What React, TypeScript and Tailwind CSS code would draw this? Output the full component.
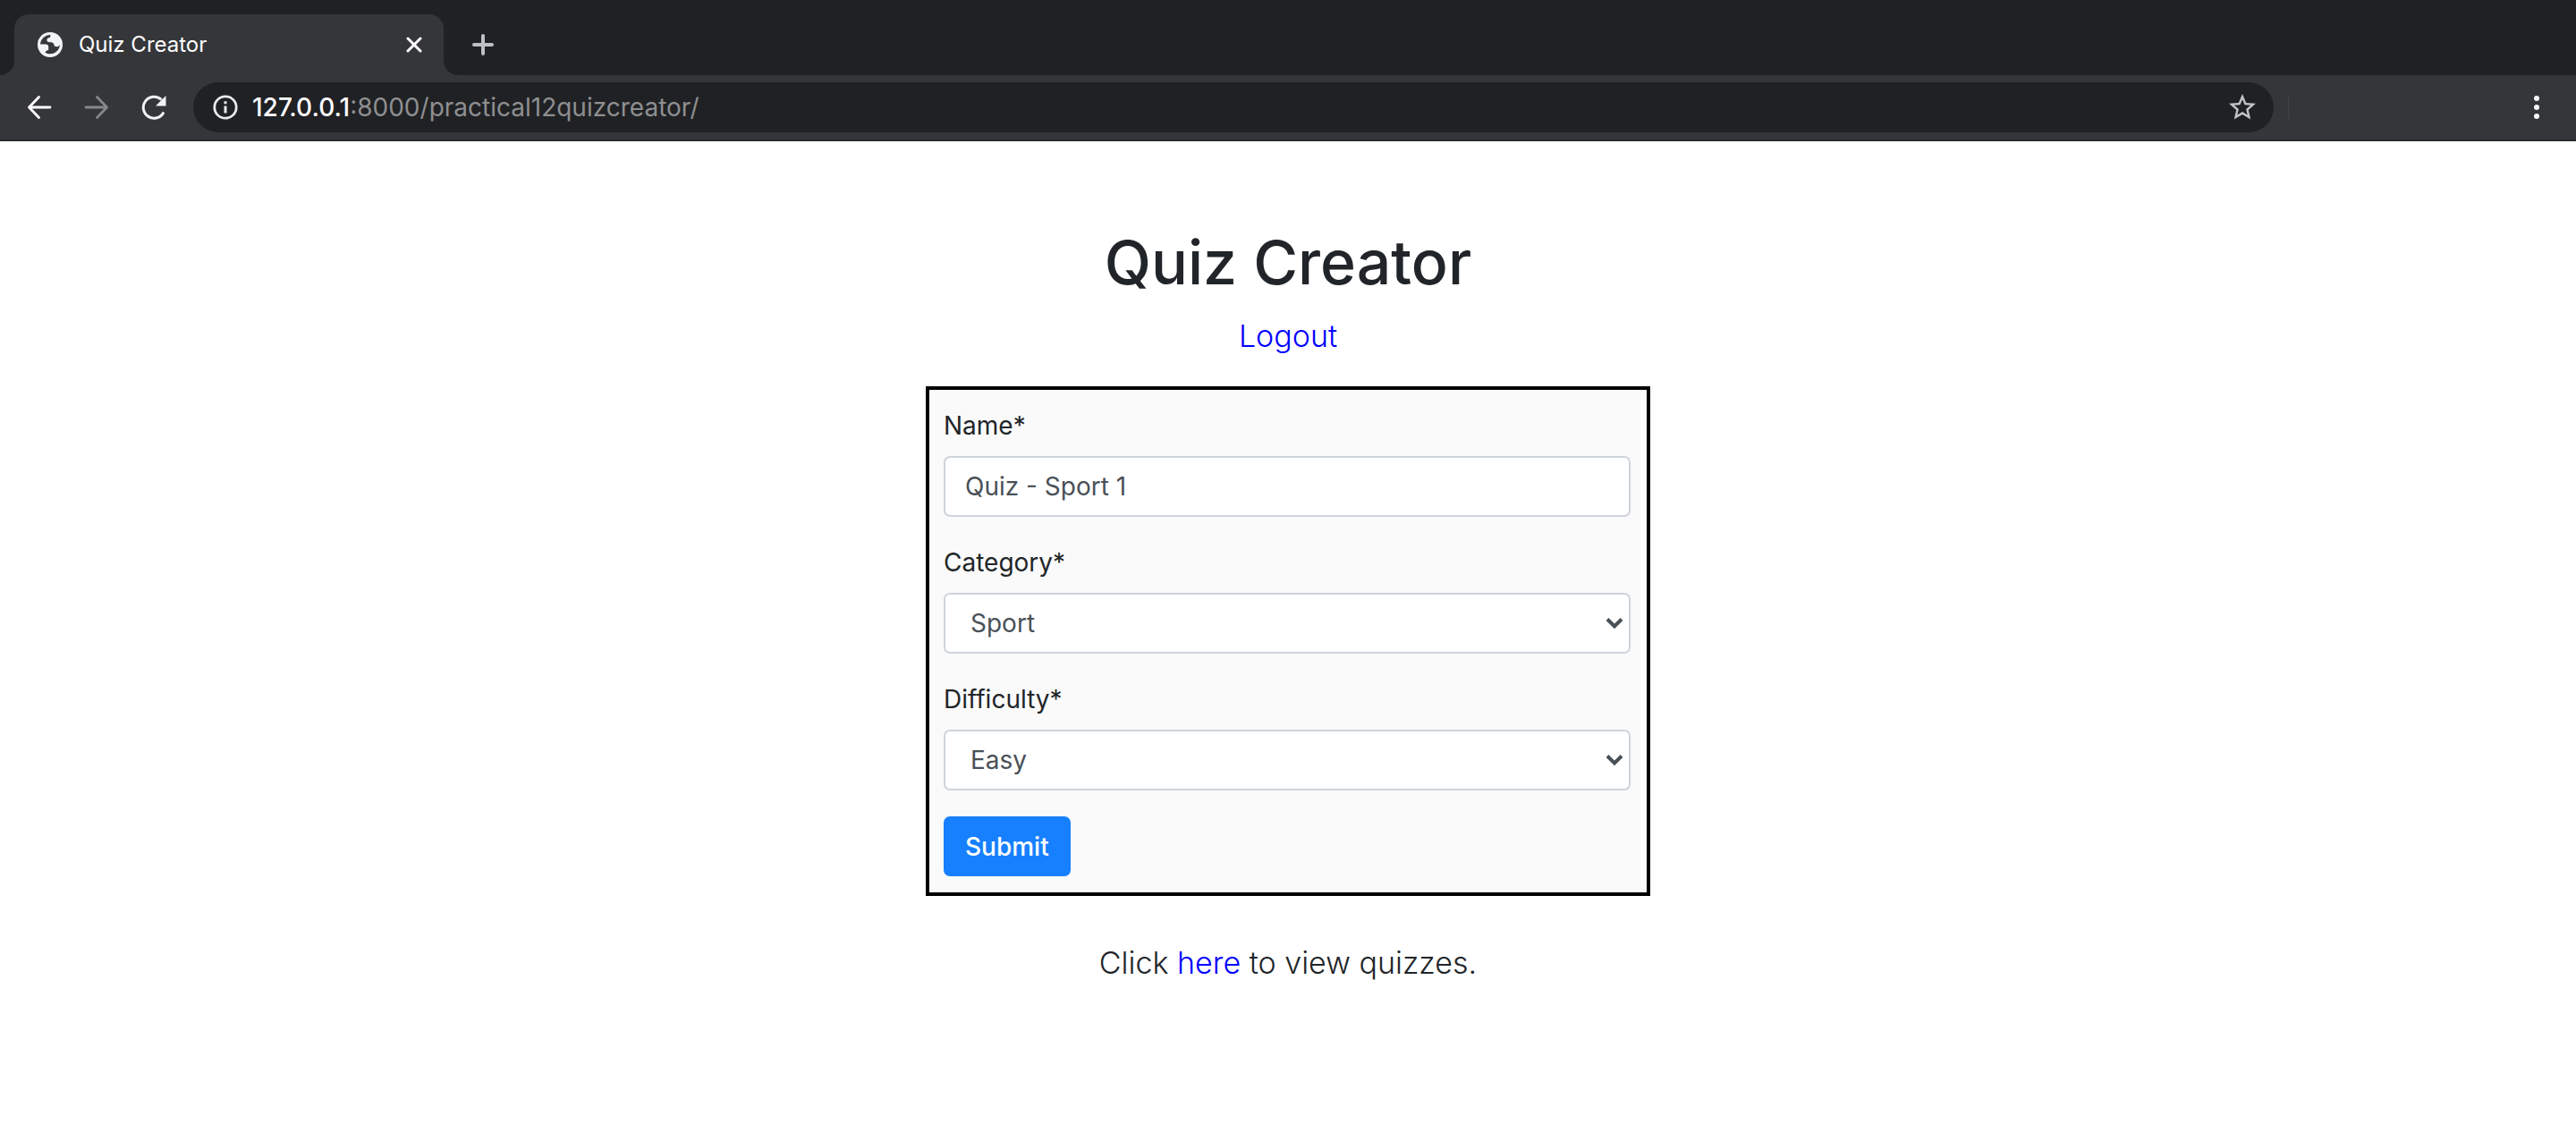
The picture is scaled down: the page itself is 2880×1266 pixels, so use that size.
import type { ReactNode } from 'react';

const fieldClass =
  'block h-17 w-full rounded-[7px] border-2 border-[#ced4da] bg-white text-[28px] leading-10 text-[#495057]';

function GlobeIcon() {
  return (
    <svg viewBox="0 0 28 28" className="size-7 shrink-0" aria-hidden="true">
      <circle cx="14" cy="14" r="14" fill="#f1f3f4" />
      <path
        d="M14.6 3.1A11 11 0 0 0 3 13.600h6c2 0 3.200 1 3.200 2.700V20c-1.500 0-2.600.600-3.800 2.800a11 11 0 0 0 16.600-9.300c-.600 1.700-1.800 2.800-3.600 2.800-2 0-3-1-3.300-3.200-.900-1.400-2-1.900-3.800-1.800-2.600.100-4-.700-3.900-2.400 0-2 1.200-2.900 3.600-2.900.100-1.100.200-1.900.600-2.900z"
        fill="#35363a"
      />
    </svg>
  );
}

function ToolbarButton({ label, children, disabled }: { label: string; children: ReactNode; disabled?: boolean }) {
  return (
    <button type="button" aria-label={label} disabled={disabled} className="flex size-8 items-center justify-center">
      {children}
    </button>
  );
}

function ArrowLeft({ className }: { className: string }) {
  return (
    <svg viewBox="0 0 28 28" className={className} fill="none" stroke="currentColor" strokeWidth="2.8" strokeLinecap="round" strokeLinejoin="round">
      <path d="M26 14H2.500M13.500 2.500L2.500 14l11 11.500" />
    </svg>
  );
}

function BrowserChrome() {
  return (
    <header className="bg-[#202124]">
      <div className="flex h-21 items-end">
        <div className="h-17 w-4 bg-[#35363a]">
          <div className="h-full rounded-br-2xl bg-[#202124]" />
        </div>
        <div className="flex h-17 w-120 items-center rounded-t-2xl bg-[#35363a] pr-6 pl-6.5">
          <GlobeIcon />
          <span className="ml-4.5 grow text-2xl text-white">Quiz Creator</span>
          <button type="button" aria-label="Close tab">
            <svg viewBox="0 0 18 18" className="size-4.5" fill="none" stroke="#fff" strokeWidth="3" strokeLinecap="round">
              <path d="M2 2l14 14M16 2L2 16" />
            </svg>
          </button>
        </div>
        <div className="h-17 w-4 bg-[#35363a]">
          <div className="h-full rounded-bl-2xl bg-[#202124]" />
        </div>
        <button type="button" aria-label="New tab" className="mb-5.5 ml-4">
          <svg viewBox="0 0 24 24" className="size-6" fill="none" stroke="#bdc1c6" strokeWidth="4" strokeLinecap="round">
            <path d="M12 2v20M2 12h20" />
          </svg>
        </button>
      </div>
      <div className="flex h-[74px] items-center border-b-2 border-[#28292c] bg-[#35363a] px-7">
        <div className="flex gap-8">
          <ToolbarButton label="Back">
            <ArrowLeft className="size-7 text-white" />
          </ToolbarButton>
          <ToolbarButton label="Forward" disabled>
            <ArrowLeft className="size-7 rotate-180 text-[#868789]" />
          </ToolbarButton>
          <ToolbarButton label="Reload">
            <svg viewBox="0 0 28 28" className="size-7">
              <path d="M25 19.500a12 12 0 1 1-2.500-14" fill="none" stroke="#f1f3f4" strokeWidth="3" />
              <path d="M27.500 1v11.500H16z" fill="#f1f3f4" />
            </svg>
          </ToolbarButton>
        </div>
        <div className="ml-7 flex h-14 grow items-center rounded-full bg-[#202124] pr-5 pl-5.5">
          <svg viewBox="0 0 28 28" className="size-7 shrink-0" aria-hidden="true">
            <circle cx="14" cy="14" r="12.200" fill="none" stroke="#e8eaed" strokeWidth="2.800" />
            <path d="M14 12.500v8M14 7.200v3" stroke="#e8eaed" strokeWidth="3" />
          </svg>
          <p className="ml-4 grow text-[28px] leading-10 text-[#8e8f91]">
            <span className="font-medium text-white">127.0.0.1</span>:8000/practical12quizcreator/
          </p>
          <button type="button" aria-label="Bookmark this tab">
            <svg viewBox="2 2 20 20" className="size-7.5" fill="#c3c4c6">
              <path d="M22 9.240l-7.190-.620L12 2 9.190 8.630 2 9.240l5.460 4.730L5.820 21 12 17.270 18.180 21l-1.630-7.030L22 9.240zM12 15.400l-3.760 2.270 1-4.280-3.320-2.880 4.380-.380L12 6.100l1.710 4.040 4.380.380-3.320 2.880 1 4.280L12 15.400z" />
            </svg>
          </button>
        </div>
        <div className="ml-4 h-7 w-1 rounded-l-full border-l border-[#414246]" />
        <button type="button" aria-label="Menu" className="ml-[258px] flex size-8 items-center justify-center">
          <svg viewBox="0 0 6 26" className="h-6.5 w-1.5" fill="#f8f9fa">
            <circle cx="3" cy="3" r="3" />
            <circle cx="3" cy="13" r="3" />
            <circle cx="3" cy="23" r="3" />
          </svg>
        </button>
      </div>
    </header>
  );
}

function Field({ id, label, children }: { id: string; label: string; children: ReactNode }) {
  return (
    <div className="mb-[29px]">
      <label htmlFor={id} className="mb-3 block text-[28px] leading-11">
        {label}
      </label>
      {children}
    </div>
  );
}

function SelectBox({ id, options }: { id: string; options: string[] }) {
  return (
    <div className="relative">
      <select id={id} defaultValue={options[0]} className={`${fieldClass} appearance-none pr-12 pl-7`}>
        {options.map((option) => (
          <option key={option}>{option}</option>
        ))}
      </select>
      <svg viewBox="0 0 20 14" className="pointer-events-none absolute top-[27px] right-2 h-3.5 w-5" fill="none" stroke="#495057" strokeWidth="4" aria-hidden="true">
        <path d="M2 2.500l8 8 8-8" />
      </svg>
    </div>
  );
}

export default function App() {
  return (
    <div className="min-h-screen bg-white font-['Inter','Liberation_Sans',sans-serif] text-[#212529]">
      <BrowserChrome />
      <main className="mx-auto max-w-[810px] pt-[93px]">
        <h1 className="text-center text-[68px] leading-[84px] font-medium">Quiz Creator</h1>
        <p className="mt-3.5 text-center text-[34px] leading-[54px] font-light">
          <a href="#logout" className="text-[#0000ff]">
            Logout
          </a>
        </p>
        <form className="mt-[29px] border-4 border-black bg-[#fafafa] py-[18px] pr-[18px] pl-4" onSubmit={(event) => event.preventDefault()}>
          <Field id="name" label="Name*">
            <input id="name" type="text" defaultValue="Quiz - Sport 1" className={`${fieldClass} px-[22px]`} />
          </Field>
          <Field id="category" label="Category*">
            <SelectBox id="category" options={['Sport']} />
          </Field>
          <Field id="difficulty" label="Difficulty*">
            <SelectBox id="difficulty" options={['Easy', 'Medium', 'Hard']} />
          </Field>
          <button type="submit" className="block h-[67px] rounded-[7px] bg-[#1780ff] px-6 text-[28px] leading-10 font-medium text-white">
            Submit
          </button>
        </form>
        <p className="mt-12 text-center text-[34px] leading-[54px] font-light">
          Click{' '}
          <a href="#quizzes" className="text-[#0000ff]">
            here
          </a>{' '}
          to view quizzes.
        </p>
      </main>
    </div>
  );
}
